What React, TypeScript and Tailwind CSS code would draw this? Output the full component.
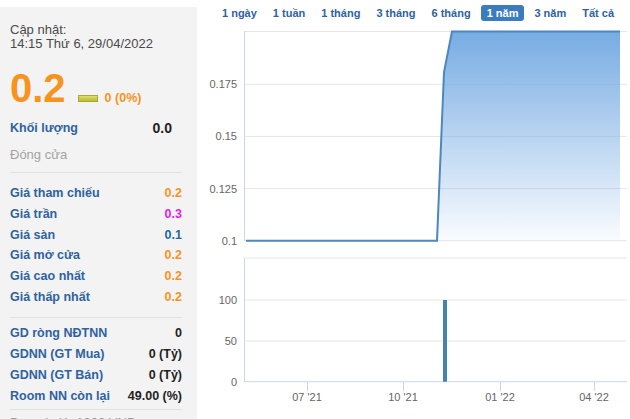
import React from "react";

const ranges = ["1 ngày", "1 tuần", "1 tháng", "3 tháng", "6 tháng", "1 năm", "3 năm", "Tất cả"];

const prices = [
  { label: "Giá tham chiếu", value: "0.2", color: "text-[#f7931e]" },
  { label: "Giá trần", value: "0.3", color: "text-[#e619e6]" },
  { label: "Giá sàn", value: "0.1", color: "text-[#1f6a9c]" },
  { label: "Giá mở cửa", value: "0.2", color: "text-[#f7931e]" },
  { label: "Giá cao nhất", value: "0.2", color: "text-[#f7931e]" },
  { label: "Giá thấp nhất", value: "0.2", color: "text-[#f7931e]" },
];

const foreign = [
  { label: "GD ròng NĐTNN", value: "0" },
  { label: "GDNN (GT Mua)", value: "0 (Tỷ)" },
  { label: "GDNN (GT Bán)", value: "0 (Tỷ)" },
  { label: "Room NN còn lại", value: "49.00 (%)" },
];

function InfoPanel() {
  return (
    <div className="mt-[7px] h-[412px] w-[197px] shrink-0 overflow-hidden bg-[#f3f3f3] pl-[10px] pr-[15px] pt-[16px]">
      <div className="text-[13px] leading-[14px] text-[#4a4a4a]">
        <div>Cập nhật:</div>
        <div>14:15 Thứ 6, 29/04/2022</div>
      </div>
      <div className="mt-[17px] flex items-baseline">
        <span className="text-[40px] font-bold leading-[40px] text-[#f7931e]">0.2</span>
        <span className="mb-[1px] ml-[12px] inline-block h-[7px] w-[20px] border border-[#a9ab2a] bg-gradient-to-b from-[#dede6a] to-[#b8bb34]" />
        <span className="ml-[7px] text-[12.5px] font-bold text-[#f7931e]">0 (0%)</span>
      </div>
      <div className="mt-[10px] flex h-[20px] items-center justify-between pr-[10px] leading-[20px]">
        <span className="text-[12.5px] font-bold text-[#2f62a1]">Khối lượng</span>
        <span className="text-[14px] font-bold text-[#222]">0.0</span>
      </div>
      <div className="mt-[7px] text-[13px] leading-[20px] text-[#a3a3a3]">Đóng cửa</div>
      <div className="mt-[7px] border-t border-[#e2e2e2]" />
      <div className="mt-[10px]">
        {prices.map((p) => (
          <div key={p.label} className="flex justify-between text-[12.5px] font-bold leading-[20.8px]">
            <span className="text-[#2f62a1]">{p.label}</span>
            <span className={p.color}>{p.value}</span>
          </div>
        ))}
      </div>
      <div className="mt-[9px] border-t border-[#e2e2e2]" />
      <div className="mt-[5px]">
        {foreign.map((f) => (
          <div key={f.label} className="flex justify-between text-[12.5px] font-bold leading-[21px]">
            <span className="text-[#2f62a1]">{f.label}</span>
            <span className="text-[#222]">{f.value}</span>
          </div>
        ))}
      </div>
      <div className="mt-[2px] border-t border-[#e2e2e2]" />
      <div className="mt-[5px] text-[13px] leading-[16px] text-[#999]">Đơn vị giá: 1000 VNĐ</div>
    </div>
  );
}

function PriceChart() {
  const grid = [
    { y: 6.5, label: "" },
    { y: 59.3, label: "0.175" },
    { y: 111.4, label: "0.15" },
    { y: 163.6, label: "0.125" },
    { y: 215.7, label: "0.1" },
  ];
  return (
    <svg width="433" height="225" className="block">
      <defs>
        <linearGradient id="area" x1="0" y1="0" x2="0" y2="1">
          <stop offset="0" stopColor="#77ace3" />
          <stop offset="1" stopColor="#77ace3" stopOpacity="0.04" />
        </linearGradient>
      </defs>
      {grid.map((g) => (
        <g key={g.y}>
          <line x1="47.5" x2="430" y1={g.y} y2={g.y} stroke="#e6e6e6" />
          {g.label && (
            <text x="40" y={g.y + 4} textAnchor="end" fontSize="11" fill="#666" fontFamily="Liberation Sans, Arial, sans-serif">
              {g.label}
            </text>
          )}
        </g>
      ))}
      <line x1="47.5" x2="47.5" y1="6" y2="216" stroke="#ccd6eb" />
      <path d="M49 215.7 L240 215.7 L247 47 L255 6.5 L423 6.5 L423 215.7 Z" fill="url(#area)" />
      <path d="M49 215.7 L240 215.7 L247 47 L255 6.5 L423 6.5" fill="none" stroke="#4c87bd" strokeWidth="2" />
    </svg>
  );
}

function VolumeChart() {
  const grid = [
    { y: 8, label: "" },
    { y: 50, label: "100" },
    { y: 91, label: "50" },
    { y: 131.7, label: "0" },
  ];
  const ticks = [
    { x: 110, label: "07 '21" },
    { x: 206, label: "10 '21" },
    { x: 303, label: "01 '22" },
    { x: 397, label: "04 '22" },
  ];
  return (
    <svg width="433" height="169" className="block">
      {grid.map((g) => (
        <g key={g.y}>
          <line x1="47.5" x2="430" y1={g.y} y2={g.y} stroke={g.label === "0" ? "#ccd6eb" : "#e6e6e6"} />
          {g.label && (
            <text x="40" y={g.y + 4} textAnchor="end" fontSize="11" fill="#666" fontFamily="Liberation Sans, Arial, sans-serif">
              {g.label}
            </text>
          )}
        </g>
      ))}
      <line x1="47.5" x2="47.5" y1="8" y2="132" stroke="#ccd6eb" />
      <rect x="246" y="50" width="4" height="81.7" fill="#4583ab" />
      {ticks.map((t) => (
        <g key={t.x}>
          <line x1={t.x + 0.5} x2={t.x + 0.5} y1="132" y2="141" stroke="#ccd6eb" />
          <text x={t.x} y="151" textAnchor="middle" fontSize="11" fill="#666" fontFamily="Liberation Sans, Arial, sans-serif">
            {t.label}
          </text>
        </g>
      ))}
    </svg>
  );
}

export default function App() {
  return (
    <div className="flex h-[419px] w-[630px] items-start overflow-hidden bg-white font-['Liberation_Sans',Arial,sans-serif]">
      <InfoPanel />
      <div className="w-[433px]">
        <div className="flex h-[25px] gap-[4px] pl-[19px] pt-[5px]">
          {ranges.map((r) => (
            <span
              key={r}
              className={
                r === "1 năm"
                  ? "h-[16px] rounded-[3px] bg-[#3a7cbd] px-[6px] text-[11px] font-bold leading-[16px] text-white"
                  : "h-[16px] px-[6px] text-[11px] font-bold leading-[16px] text-[#2f62a1]"
              }
            >
              {r}
            </span>
          ))}
        </div>
        <PriceChart />
        <VolumeChart />
      </div>
    </div>
  );
}
